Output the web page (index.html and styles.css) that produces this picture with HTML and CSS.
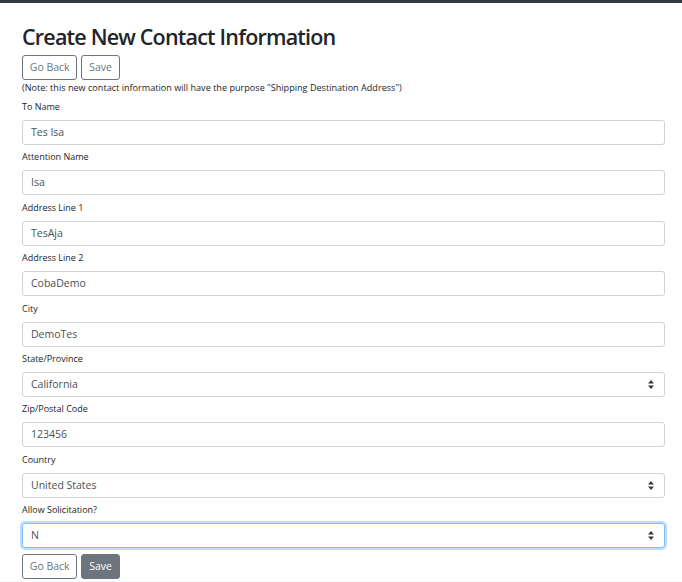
FILE: index.html
```html
<!DOCTYPE html>
<html>
<head>
<meta charset="utf-8">
<link rel="stylesheet" href="styles.css">
</head>
<body>
<div class="topbar"></div>
<main class="page">
  <h1 class="title">Create New Contact Information</h1>
  <div class="actions">
    <button class="btn btn-outline">Go Back</button>
    <button class="btn btn-outline">Save</button>
  </div>
  <div class="note">(Note: this new contact information will have the purpose "Shipping Destination Address")</div>
  <form class="form">
    <div class="group"><label class="label">To Name</label><div class="control">Tes Isa</div></div>
    <div class="group"><label class="label">Attention Name</label><div class="control">Isa</div></div>
    <div class="group"><label class="label">Address Line 1</label><div class="control">TesAja</div></div>
    <div class="group"><label class="label">Address Line 2</label><div class="control">CobaDemo</div></div>
    <div class="group"><label class="label">City</label><div class="control">DemoTes</div></div>
    <div class="group"><label class="label">State/Province</label><div class="control select"><span>California</span><svg class="arrows" width="6" height="9" viewBox="0 0 6 9"><path d="M3 0L6 3.5H0z M3 9L0 5.5H6z" fill="#343a40"/></svg></div></div>
    <div class="group"><label class="label">Zip/Postal Code</label><div class="control">123456</div></div>
    <div class="group"><label class="label">Country</label><div class="control select"><span>United States</span><svg class="arrows" width="6" height="9" viewBox="0 0 6 9"><path d="M3 0L6 3.5H0z M3 9L0 5.5H6z" fill="#343a40"/></svg></div></div>
    <div class="group last"><label class="label">Allow Solicitation?</label><div class="control select focus"><span>N</span><svg class="arrows" width="6" height="9" viewBox="0 0 6 9"><path d="M3 0L6 3.5H0z M3 9L0 5.5H6z" fill="#343a40"/></svg></div></div>
  </form>
  <div class="actions bottom">
    <button class="btn btn-outline">Go Back</button>
    <button class="btn btn-solid">Save</button>
  </div>
</main>
<div class="footer"></div>
</body>
</html>
```

FILE: styles.css
```css
html, body {
  margin: 0;
  padding: 0;
  background: #fff;
  font-family: "Open Sans", "Noto Sans", sans-serif;
  color: #212529;
}
.topbar {
  height: 3px;
  background: #343a40;
}
.page {
  padding: 0 17px 0 22px;
}
.title {
  margin: 0;
  padding-top: 19px;
  font-size: 21.5px;
  font-weight: 600;
  line-height: 30px;
  letter-spacing: -0.8px;
  color: #212529;
}
.actions {
  display: flex;
  gap: 4px;
  margin-top: 3px;
}
.btn {
  font-family: inherit;
  font-size: 10.5px;
  height: 25px;
  padding: 0 6.8px;
  border-radius: 3px;
  border: 1px solid #6c757d;
  background: #fff;
  color: #6c757d;
  line-height: 23px;
  cursor: pointer;
}
.btn-solid {
  background: #6c757d;
  color: #fff;
}
.note {
  font-size: 9.1px;
  line-height: 16px;
  color: #212529;
}
.form {
  margin-top: 3px;
}
.group {
  margin-bottom: 4.4px;
}
.label {
  display: block;
  font-size: 9px;
  line-height: 16px;
  margin-bottom: 5px;
}
.control {
  box-sizing: border-box;
  height: 25px;
  border: 1px solid #ced4da;
  border-radius: 3px;
  padding: 0 8px;
  font-size: 10.5px;
  line-height: 23px;
  color: #495057;
  display: flex;
  align-items: center;
  justify-content: space-between;
}
.select .arrows {
  margin-right: 2px;
}
.focus {
  border-color: #80bdff;
  box-shadow: 0 0 0 2px rgba(0, 123, 255, 0.25);
}
.group.last {
  margin-bottom: 0;
}
.bottom {
  margin-top: 6px;
}
.footer {
  margin-top: 2px;
  height: 10px;
  background: #f5f6f7;
}
```
